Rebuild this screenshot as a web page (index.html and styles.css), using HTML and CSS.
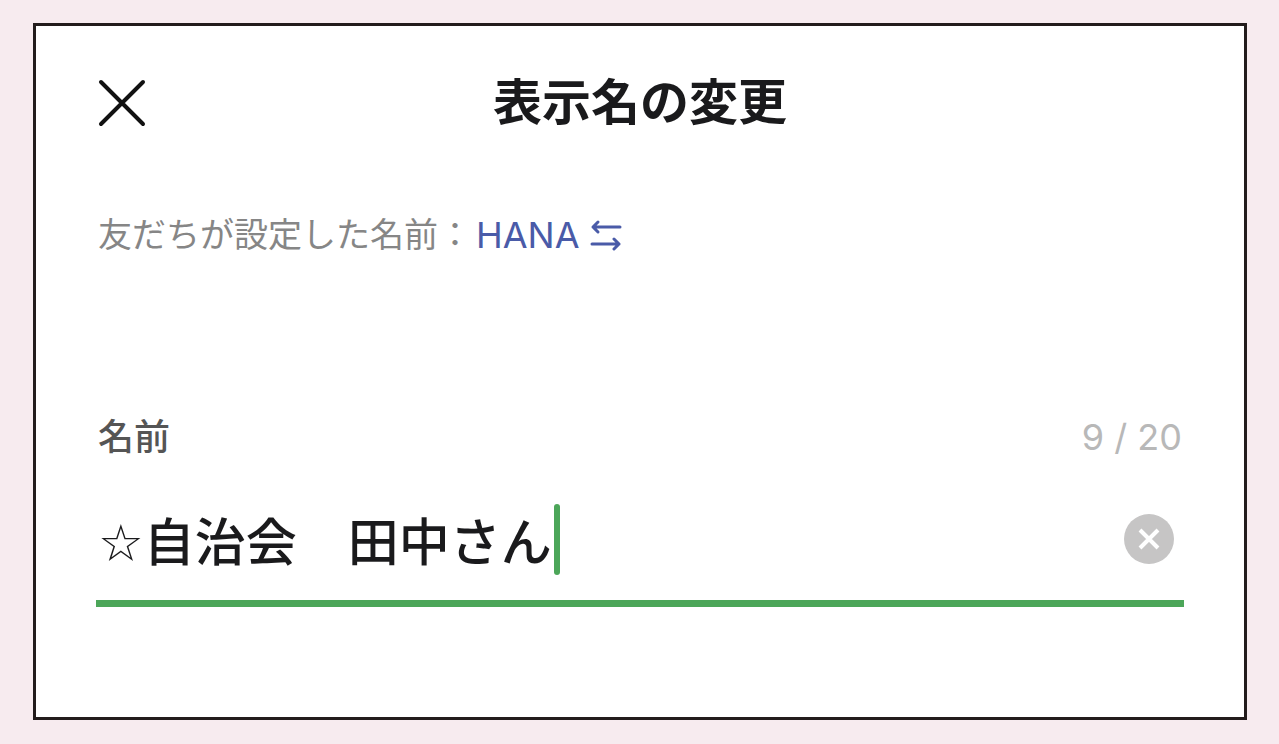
FILE: index.html
```html
<!DOCTYPE html>
<html lang="ja">
<head>
    <meta charset="UTF-8">
    <meta name="viewport" content="width=device-width, initial-scale=1.0">
    <title>表示名の変更</title>
    <link rel="stylesheet" href="styles.css">
</head>
<body>
    <main class="card">
        <header class="header">
            <button type="button" class="close" aria-label="閉じる">
                <svg viewBox="0 0 48 48" width="48" height="48" fill="none" stroke="currentColor" stroke-width="4" stroke-linecap="round">
                    <path d="M3 3L45 45M45 3L3 45"/>
                </svg>
            </button>
            <h1>表示名の変更</h1>
        </header>

        <p class="original">
            <span>友だちが設定した名前：</span>
            <a href="#name">HANA
                <svg viewBox="0 0 32 32" width="32" height="32" fill="none" stroke="currentColor" stroke-width="3" stroke-linecap="round" stroke-linejoin="round">
                    <path d="M30 8H3M8 3L3 8L8 13"/>
                    <path d="M2 25H29M24 20L29 25L24 30"/>
                </svg>
            </a>
        </p>

        <form class="form">
            <div class="label-row">
                <label for="name">名前</label>
                <span class="count">9 / 20</span>
            </div>
            <div class="field">
                <input type="text" id="name" value="☆自治会　田中さん" maxlength="20" autocomplete="off">
                <span class="caret"></span>
                <button type="button" class="clear" aria-label="クリア">
                    <svg viewBox="0 0 50 50" width="50" height="50">
                        <circle cx="25" cy="25" r="25" fill="#c6c5c5"/>
                        <path d="M16 16L34 34M34 16L16 34" fill="none" stroke="#fff" stroke-width="4"/>
                    </svg>
                </button>
            </div>
        </form>
    </main>
</body>
</html>
```
FILE: styles.css
```css
* {
    box-sizing: border-box;
}

body {
    font-family: Inter, "Noto Sans CJK JP", sans-serif;
    background-color: #f7ebef;
    margin: 0;
    padding: 23px 32px 24px 33px;
}

.card {
    background: #fff;
    border: 3px solid #231c1c;
    padding: 49px 60px 110px;
}

button {
    display: flex;
    padding: 0;
    border: none;
    background: none;
    cursor: pointer;
}

.header {
    display: grid;
    grid-template-columns: 48px 1fr 48px;
    align-items: center;
    height: 56px;
    padding: 0 2px;
}

.close {
    color: #111;
}

h1 {
    margin: 0;
    text-align: center;
    font-size: 49px;
    line-height: 56px;
    font-weight: 700;
    color: #1a1a1c;
}

.original {
    display: flex;
    align-items: center;
    gap: 4px;
    margin: 79px 0 0;
    padding: 0 2px;
    font-size: 34px;
    line-height: 50px;
    color: #868686;
}

.original a {
    display: flex;
    align-items: center;
    gap: 10px;
    font-size: 36px;
    color: #4a5ba8;
    text-decoration: none;
}

.form {
    margin-top: 152px;
}

.label-row {
    display: flex;
    justify-content: space-between;
    align-items: center;
    padding: 0 2px;
    font-size: 36px;
    line-height: 50px;
}

.label-row label {
    font-weight: 500;
    color: #555;
}

.count {
    color: #b8b8b8;
}

.field {
    display: flex;
    align-items: center;
    height: 145px;
    padding: 16px 10px 0 2px;
    border-bottom: 7px solid #4ca659;
}

/* DejaVu only supplies the thin star */
.field input {
    field-sizing: content;
    padding: 0;
    border: none;
    outline: none;
    background: none;
    font-family: "DejaVu Sans", "Noto Sans CJK JP", sans-serif;
    font-size: 51px;
    font-weight: 500;
    color: #1a1a1c;
}

.caret {
    width: 6px;
    height: 71px;
    margin-left: 2px;
    border-radius: 3px;
    background: #4ca659;
}

.clear {
    margin-left: auto;
}
```
